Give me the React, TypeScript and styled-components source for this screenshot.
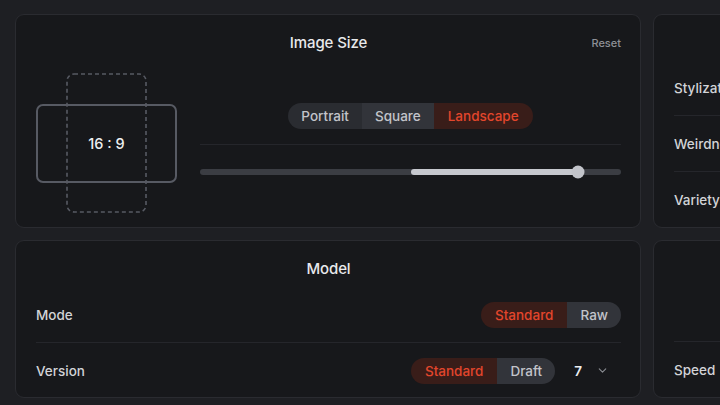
import React from 'react';
import styled, { createGlobalStyle } from 'styled-components';
import { ChevronDown } from 'lucide-react';

const GlobalStyle = createGlobalStyle`
  html, body {
    margin: 0;
    background-color: #1e1f23;
    overflow: hidden;
  }
  body {
    font-family: Inter, 'Noto Sans', sans-serif;
    color: #e6e7ea;
    -webkit-font-smoothing: antialiased;
  }
`;

const Page = styled.div`
  display: grid;
  grid-template-columns: 626px 300px;
  grid-template-rows: 214px 158px;
  gap: 12px;
  padding: 14px 0 0 15px;
  width: 720px;
  height: 405px;
  box-sizing: border-box;
`;

const Panel = styled.section`
  display: flex;
  flex-direction: column;
  background-color: #17181b;
  border: 1px solid #2a2b30;
  border-radius: 9px;
  padding: 18px 19px 0 20px;
  box-sizing: border-box;
  min-width: 0;
`;

const Header = styled.header`
  display: grid;
  grid-template-columns: 1fr auto 1fr;
  align-items: center;
  height: 18px;
`;

const Title = styled.h2`
  grid-column: 2;
  margin: 0;
  font-size: 15px;
  font-weight: 500;
  letter-spacing: -0.1px;
  color: #e8e9eb;
`;

const Reset = styled.button`
  grid-column: 3;
  justify-self: end;
  background: none;
  border: none;
  padding: 0;
  font-family: inherit;
  font-size: 11px;
  font-weight: 500;
  color: #8e9096;
`;

const SizeBody = styled.div`
  display: flex;
  gap: 24px;
  margin-top: 22px;
`;

const Preview = styled.div`
  display: grid;
  place-items: center;
  width: 140px;
  height: 140px;
  flex-shrink: 0;

  & > * {
    grid-area: 1 / 1;
  }
`;

const RatioBox = styled.div`
  display: flex;
  align-items: center;
  justify-content: center;
  width: 137px;
  height: 75px;
  border: 2px solid #575a63;
  border-radius: 7px;
  font-size: 14.5px;
  font-weight: 500;
  color: #eeeff1;
`;

const Controls = styled.div`
  flex: 1;
  display: flex;
  flex-direction: column;
  align-items: center;
  padding-top: 30px;
`;

const Segmented = styled.div`
  display: flex;
  height: 26px;
  border-radius: 13px;
  overflow: hidden;
`;

const Segment = styled.div<{ $active?: boolean; $light?: boolean }>`
  display: flex;
  align-items: center;
  padding: 0 ${({ $active }) => ($active ? '14px' : '13px')};
  font-size: 13.5px;
  font-weight: 500;
  background-color: ${({ $active, $light }) =>
    $active ? '#391d19' : $light ? '#32343a' : '#2a2c31'};
  color: ${({ $active }) => ($active ? '#e2462c' : '#c2c4ca')};
`;

const Divider = styled.hr`
  align-self: stretch;
  margin: 15px 0 0;
  border: none;
  border-top: 1px solid #25262b;
`;

const Track = styled.div`
  position: relative;
  align-self: stretch;
  height: 6px;
  margin-top: 24px;
  border-radius: 3px;
  background-color: #3b3d43;
`;

const Fill = styled.div`
  position: absolute;
  top: 0;
  bottom: 0;
  border-radius: 3px;
  background-color: #c6c8ce;
`;

const Thumb = styled.div`
  position: absolute;
  top: 50%;
  width: 13px;
  height: 13px;
  border-radius: 50%;
  background-color: #c2c4ca;
  transform: translate(-50%, -50%);
`;

const Rows = styled.div<{ $offset?: number }>`
  display: flex;
  flex-direction: column;
  margin-top: ${({ $offset }) => $offset ?? 10}px;
`;

const Row = styled.div`
  display: flex;
  align-items: center;
  gap: 7px;
  height: 55px;

  & + & {
    border-top: 1px solid #25262b;
  }
`;

const Label = styled.span`
  flex: 1;
  font-size: 13.5px;
  font-weight: 500;
  color: #d2d3d7;
  white-space: nowrap;
`;

const Select = styled.div`
  display: flex;
  align-items: center;
  gap: 14px;
  height: 26px;
  padding: 0 12px;
  font-size: 13.5px;
  font-weight: 600;
  color: #eceef0;

  svg {
    color: #8a8c92;
  }
`;

const SideRows = styled(Rows)`
  margin-right: -40px;
`;

const ImageSize = () => (
  <Panel>
    <Header>
      <Title>Image Size</Title>
      <Reset>Reset</Reset>
    </Header>
    <SizeBody>
      <Preview>
        <RatioBox>16 : 9</RatioBox>
        <svg width="81" height="140" viewBox="0 0 81 140">
          <rect
            x="1"
            y="1"
            width="79"
            height="138"
            rx="7"
            fill="none"
            stroke="#575a63"
            strokeWidth="1.6"
            strokeDasharray="4 3"
          />
        </svg>
      </Preview>
      <Controls>
        <Segmented>
          <Segment>Portrait</Segment>
          <Segment $light>Square</Segment>
          <Segment $active>Landscape</Segment>
        </Segmented>
        <Divider />
        <Track>
          <Fill style={{ left: '50%', right: '10.2%' }} />
          <Thumb style={{ left: '89.8%' }} />
        </Track>
      </Controls>
    </SizeBody>
  </Panel>
);

const Model = () => (
  <Panel>
    <Header>
      <Title>Model</Title>
    </Header>
    <Rows>
      <Row>
        <Label>Mode</Label>
        <Segmented>
          <Segment $active>Standard</Segment>
          <Segment $light>Raw</Segment>
        </Segmented>
      </Row>
      <Row>
        <Label>Version</Label>
        <Segmented>
          <Segment $active>Standard</Segment>
          <Segment $light>Draft</Segment>
        </Segmented>
        <Select>
          7
          <ChevronDown size={13} strokeWidth={2} />
        </Select>
      </Row>
    </Rows>
  </Panel>
);

const Aesthetics = () => (
  <Panel>
    <Header />
    <SideRows $offset={9}>
      <Row>
        <Label>Stylization</Label>
      </Row>
      <Row>
        <Label>Weirdness</Label>
      </Row>
      <Row>
        <Label>Variety</Label>
      </Row>
    </SideRows>
  </Panel>
);

const More = () => (
  <Panel>
    <Header />
    <SideRows>
      <Row />
      <Row>
        <Label>Speed</Label>
      </Row>
    </SideRows>
  </Panel>
);

export default function App() {
  return (
    <>
      <GlobalStyle />
      <Page>
        <ImageSize />
        <Aesthetics />
        <Model />
        <More />
      </Page>
    </>
  );
}
